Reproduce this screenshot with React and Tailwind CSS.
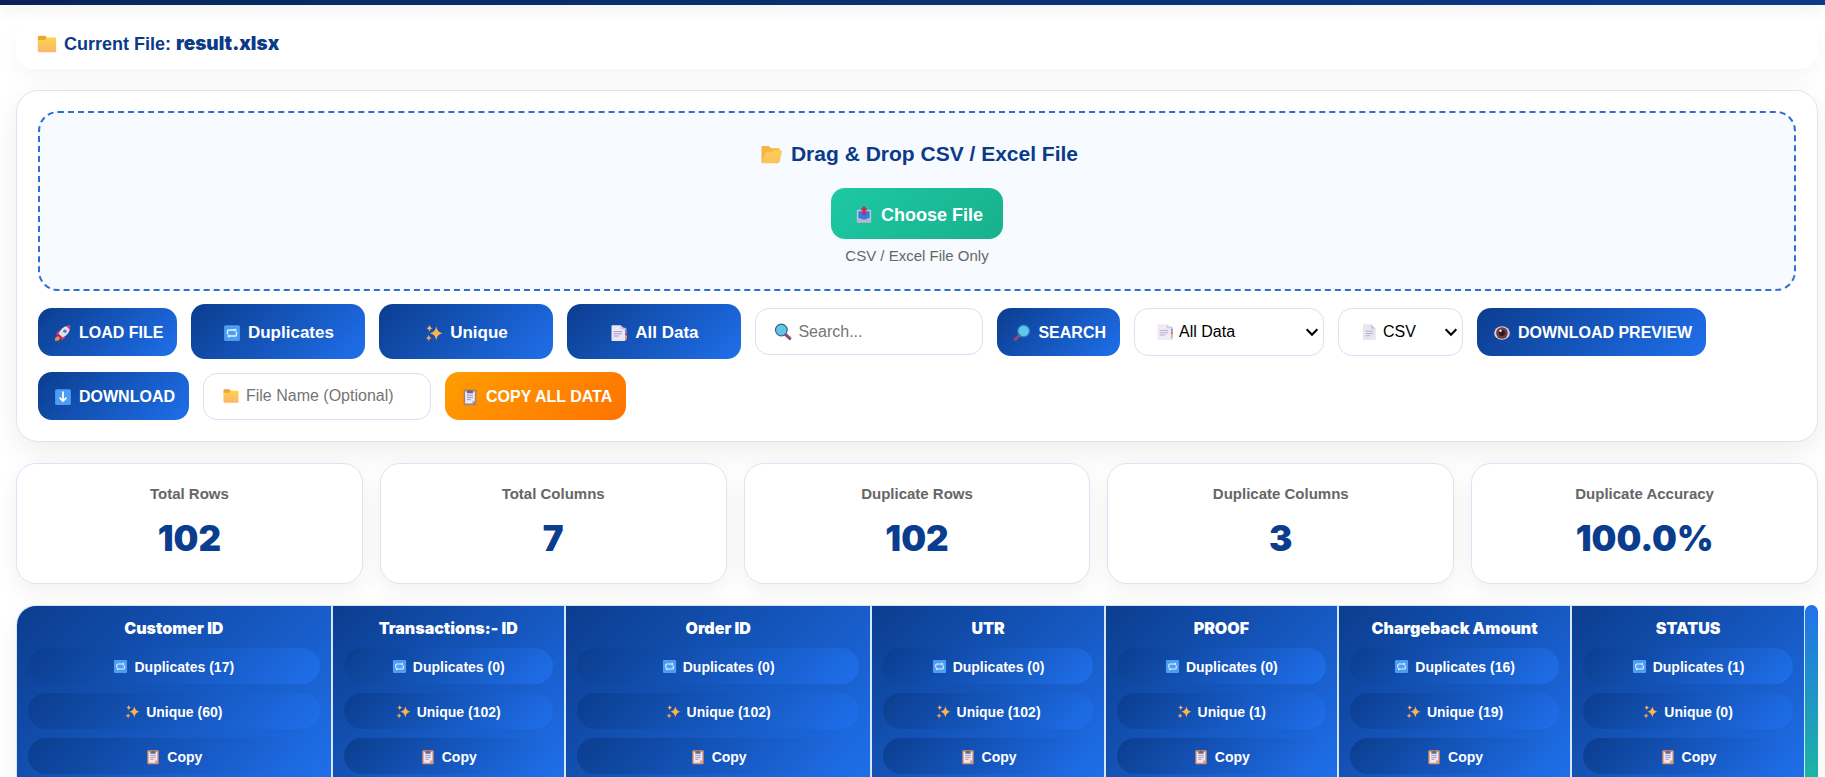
import React, { useRef, useState } from "react";

const BLUE = "bg-[linear-gradient(135deg,#0b3d8e,#1f6feb)]";

const stats = [
  { label: "Total Rows", value: "102" },
  { label: "Total Columns", value: "7" },
  { label: "Duplicate Rows", value: "102" },
  { label: "Duplicate Columns", value: "3" },
  { label: "Duplicate Accuracy", value: "100.0%" },
];

const columns = [
  { name: "Customer ID", duplicates: 17, unique: 60, width: "w-[17.6%]" },
  { name: "Transactions:- ID", duplicates: 0, unique: 102, width: "w-[13.05%]" },
  { name: "Order ID", duplicates: 0, unique: 102, width: "w-[17.15%]" },
  { name: "UTR", duplicates: 0, unique: 102, width: "w-[13.05%]" },
  { name: "PROOF", duplicates: 0, unique: 1, width: "w-[13.05%]" },
  { name: "Chargeback Amount", duplicates: 16, unique: 19, width: "w-[13.05%]" },
  { name: "STATUS", duplicates: 1, unique: 0, width: "w-[13.05%]" },
];

// Icons
function Icon({ className = "size-[18px]", children }) {
  return (
    <svg viewBox="0 0 24 24" className={`shrink-0 ${className}`} fill="none" aria-hidden="true">
      {children}
    </svg>
  );
}

function FolderIcon({ className }) {
  return (
    <Icon className={className}>
      <defs>
        <linearGradient id="folder" x1="0" y1="0" x2="0" y2="1">
          <stop stopColor="#fdd44b" />
          <stop offset="1" stopColor="#fbb56c" />
        </linearGradient>
      </defs>
      <path d="M2 4.500C2 3.700 2.600 3 3.500 3h6c.7 0 1 .3 1.400.8L12 5.500 9 9H2z" fill="#e9a835" />
      <path d="M2 7.500h7.500L12 5h8.700c.8 0 1.300.6 1.300 1.300v13c0 1-.7 1.700-1.600 1.700H3.600C2.700 21 2 20.300 2 19.400z" fill="url(#folder)" />
    </Icon>
  );
}

function OpenFolderIcon({ className }) {
  return (
    <Icon className={className}>
      <defs>
        <linearGradient id="openFolder" x1="0" y1="0" x2="0" y2="1">
          <stop stopColor="#fdcf50" />
          <stop offset="1" stopColor="#fcbf60" />
        </linearGradient>
      </defs>
      <path d="M1.500 4.300C1.500 3.500 2 3 2.800 3h5.700c.6 0 1 .2 1.400.7L11.500 5.500h7.700c.8 0 1.300.6 1.300 1.300V19H3.500L1.500 20z" fill="#f5b548" />
      <path d="M8.500 9h4.500l1.500-1.500h7c1 0 1.500.8 1.300 1.700l-2.300 10.300c-.2.900-1 1.500-2 1.500H3c-1 0-1.500-.5-1.500-1.500L6.300 10.300C6.700 9.400 7.500 9 8.500 9z" fill="url(#openFolder)" />
    </Icon>
  );
}

function OutboxIcon({ className }) {
  return (
    <Icon className={className}>
      <path d="M4 5h16c1 0 1.500.6 1.500 1.500V21c0 .6-.4 1-1 1h-17c-.6 0-1-.4-1-1V6.500C2.500 5.600 3 5 4 5z" fill="#c9c3dc" />
      <path d="M4.500 7h15v9l-3.500 2H8l-3.500-2z" fill="#2f7fe0" />
      <path d="M2.500 16.500H8L9.500 18.500h5l1.500-2h5.500V21c0 .6-.4 1-1 1h-17c-.6 0-1-.4-1-1z" fill="#b9b4d0" />
      <path d="M12 0 17 5.800h-3V12h-4V5.800H7z" fill="#d0214f" />
    </Icon>
  );
}

function RocketIcon({ className }) {
  return (
    <Icon className={className}>
      <path d="M5.500 15.500 1.500 18.500 1.500 22.500l4.500-.5 2.500-3.500z" fill="#f58b3c" />
      <path d="M9.500 8.500 4.500 10 2.500 14.500l5-.5z" fill="#e8305c" />
      <path d="M15.500 14.500 14 19.500 9.500 21.500l.5-5z" fill="#e8305c" />
      <path d="M21.500 2.500c.3 5-1.500 9.500-6 13L11 18l-5-5 2.500-4.500C12 4 16.500 2.200 21.500 2.500z" fill="#e2dfec" />
      <path d="M21.500 2.500c.1 1.800-.1 3.500-.6 5.200L16.300 3.100c1.600-.5 3.400-.7 5.200-.6z" fill="#ef3b62" />
      <circle cx="14.500" cy="9.500" r="2.300" fill="#3a7fd0" />
      <path d="m6 13 5 5-2 1.500L4.500 15z" fill="#c52750" />
    </Icon>
  );
}

function RepeatIcon({ className }) {
  return (
    <Icon className={className}>
      <rect x="1.500" y="1.500" width="21" height="21" rx="2" fill="#4d9df3" />
      <path d="M6 13V9.800C6 8.800 6.800 8 7.800 8H16M18 11v3.200c0 1-.8 1.800-1.800 1.800H8" stroke="#e8f3ff" strokeWidth="1.800" strokeLinecap="round" />
      <path d="M15.500 5.500 18.500 8l-3 2.500zM8.500 13.500l-3 2.500 3 2.500z" fill="#e8f3ff" />
    </Icon>
  );
}

function SparklesIcon({ className }) {
  return (
    <Icon className={className}>
      <path d="M15 3c1 5.200 2.700 7.800 8.500 9.200C17.700 13.600 16 16.300 15 21.500c-1-5.200-2.700-7.900-8.500-9.300C12.300 10.800 14 8.200 15 3z" fill="#fcb34c" />
      <path d="M6 1C6.500 3.800 7.400 5 10 5.700 7.400 6.400 6.500 7.700 6 10.500 5.500 7.700 4.600 6.400 2 5.700 4.600 5 5.500 3.800 6 1z" fill="#fbb46a" />
      <path d="M5 14c.5 2.800 1.400 4 4 4.700C6.400 19.400 5.500 20.700 5 23.500c-.5-2.800-1.400-4.100-4-4.800C3.600 18 4.500 16.800 5 14z" fill="#f79a5b" />
    </Icon>
  );
}

function TabsIcon({ className }) {
  return (
    <Icon className={className}>
      <path d="M6 5h14.500c.8 0 1.500.7 1.500 1.500V21c0 .6-.4 1-1 1H6z" fill="#b7a9c9" />
      <path d="M20 8h2.500v3H20z" fill="#3f8de0" />
      <path d="M20 12h2.500v3H20z" fill="#e23d5f" />
      <path d="M20 16h2.500v3H20z" fill="#f2a544" />
      <path d="M2 2.500C2 2 2.400 1.500 3 1.500h11L20 7v14.500c0 .6-.5 1-1 1H3c-.6 0-1-.4-1-1z" fill="#ece4f7" />
      <path d="M14 1.500 20 7h-5c-.6 0-1-.4-1-1z" fill="#cdbfdd" />
      <path d="M5 10h11M5 13h11M5 16h7" stroke="#a79bbd" strokeWidth="1.300" />
    </Icon>
  );
}

function PageIcon({ className }) {
  return (
    <Icon className={className}>
      <path d="M4 2.500C4 2 4.400 1.500 5 1.500h9.500L21 7.500v14c0 .6-.4 1-1 1H5c-.6 0-1-.4-1-1z" fill="#e4deee" />
      <path d="M14.500 1.500 21 7.500h-5.500c-.6 0-1-.4-1-1z" fill="#c3b6d2" />
      <path d="M7.500 11h10M7.500 14h10M7.500 17h6" stroke="#aaa0bd" strokeWidth="1.300" />
    </Icon>
  );
}

// The lens is at the left; flip puts it at the right
function MagnifierIcon({ className, flip }) {
  return (
    <Icon className={className}>
      <g transform={flip ? "matrix(-1 0 0 1 24 0)" : undefined}>
        <path d="m15.500 15.500 5.500 5" stroke="#8b4a78" strokeWidth="4.200" strokeLinecap="round" />
        <circle cx="9.800" cy="9.300" r="7.800" fill="#5fc6e8" stroke={flip ? "#2f7fc4" : "#3f5f88"} strokeWidth="1.600" />
      </g>
    </Icon>
  );
}

function EyeIcon({ className }) {
  return (
    <Icon className={className}>
      <ellipse cx="12" cy="12" rx="10.500" ry="9" fill="#dccfd8" />
      <circle cx="12" cy="12" r="7.800" fill="#6d3a3f" />
      <circle cx="12" cy="12" r="4" fill="#2b1a22" />
      <circle cx="10" cy="9" r="1.600" fill="#fff" />
    </Icon>
  );
}

function DownIcon({ className }) {
  return (
    <Icon className={className}>
      <rect x="1.500" y="1.500" width="21" height="21" rx="2" fill="#4d9df3" />
      <path d="M12 5.500V17M8 13.500l4 4 4-4" stroke="#fff" strokeWidth="2.400" strokeLinecap="round" strokeLinejoin="round" />
    </Icon>
  );
}

function ClipboardIcon({ className, board = "#dd9270" }) {
  return (
    <Icon className={className}>
      <rect x="3.500" y="2" width="17" height="21" rx="1.500" fill={board} />
      <path d="M5.500 4.500h13v12.500L15 20.500H5.500z" fill="#eee6f5" />
      <path d="M15 20.500V17h3.500z" fill="#c3b4d3" />
      <path d="M8 9.500h8M8 12.500h8M8 15.500h5" stroke="#9c90b5" strokeWidth="1.300" />
      <path d="M8 3.500h2.300a1.800 1.800 0 0 1 3.400 0H16V7H8z" fill="#6f6878" />
    </Icon>
  );
}

function ChevronIcon({ className }) {
  return (
    <Icon className={className}>
      <path d="m4 8 8 8 8-8" stroke="#000" strokeWidth="3.200" />
    </Icon>
  );
}

// Toolbar parts
function ActionButton({ icon, children, className = BLUE }) {
  return (
    <button type="button" className={`flex h-12 items-center gap-[7px] rounded-[14px] pt-0.5 pr-3.5 pl-4 text-base font-bold text-white ${className}`}>
      {icon}
      {children}
    </button>
  );
}

function FilterButton({ icon, children }) {
  return (
    <button type="button" className={`flex h-[55px] w-[174px] items-center justify-center gap-[7px] rounded-[14px] pt-0.5 text-[17px] font-bold text-white ${BLUE}`}>
      {icon}
      {children}
    </button>
  );
}

function TextField({ icon, ...props }) {
  return (
    <label className="relative flex items-center">
      <span className="absolute left-[19px]">{icon}</span>
      <input
        type="text"
        className="h-[47px] w-[228px] rounded-[14px] border border-[#dcdff5] bg-white pr-4 pl-[42px] text-base text-black placeholder:text-[#757575]"
        {...props}
      />
    </label>
  );
}

function SelectField({ icon, label, className, options }) {
  return (
    <label className="relative flex items-center">
      <span className="absolute left-[22px] opacity-80">{icon}</span>
      <select aria-label={label} className={`h-12 appearance-none rounded-[14px] border border-[#dcdff5] bg-white pl-11 text-base text-black ${className}`}>
        {options.map((option) => (
          <option key={option}>{option}</option>
        ))}
      </select>
      <ChevronIcon className="pointer-events-none absolute right-1 size-4" />
    </label>
  );
}

function ColumnButton({ icon, children }) {
  return (
    <button type="button" className={`flex h-9 w-full items-center justify-center gap-1.5 rounded-[18px] pt-px text-sm font-bold text-white ${BLUE}`}>
      {icon}
      {children}
    </button>
  );
}

export default function App() {
  const fileInput = useRef(null);
  const [fileName, setFileName] = useState("result.xlsx");

  // Show the name of the picked file
  const handleFile = (e) => {
    if (e.target.files[0]) setFileName(e.target.files[0].name);
  };

  return (
    <div className="h-screen overflow-hidden bg-white font-['Liberation_Sans',Arial,sans-serif]">
      {/* Header */}
      <header className="relative z-10 h-[5px] bg-[linear-gradient(90deg,#0a1f55,#07295f_8%,#0b3a8a)] shadow-[0_4px_14px_rgba(0,0,0,0.12)]" />

      <main className="flex flex-col pt-3.5 pr-[7px] pl-4">
        {/* Current file */}
        <div className="flex h-[50px] items-center gap-1.5 rounded-[18px] bg-white px-5 text-lg font-bold text-[#0b3a88] shadow-[0_10px_22px_rgba(0,0,0,0.04)]">
          <FolderIcon className="size-[22px]" />
          <p>
            Current File: <span className="font-['Inter'] text-[19px] font-black">{fileName}</span>
          </p>
        </div>

        {/* Upload and actions */}
        <section className="mt-[21px] rounded-[22px] border border-[#dfe2f6] bg-white px-[21px] pt-5 pb-[21px] shadow-[0_10px_30px_rgba(0,0,0,0.07)]">
          <div className="flex h-[180px] flex-col items-center rounded-[20px] border-2 border-dashed border-[#2f6fd0] bg-[#f7fbff] pt-[27px]">
            <h2 className="flex items-center gap-2 pl-1 text-[21px] leading-7 font-bold text-[#0b3a88]">
              <OpenFolderIcon className="size-[23px]" />
              Drag &amp; Drop CSV / Excel File
            </h2>
            <button
              type="button"
              onClick={() => fileInput.current.click()}
              className="mt-5 flex h-[51px] items-center gap-2 rounded-[14px] bg-[linear-gradient(135deg,#1dc9a4,#18b08c)] pt-0.5 pr-5 pl-6 text-lg font-bold text-white"
            >
              <OutboxIcon />
              Choose File
            </button>
            <input ref={fileInput} type="file" accept=".csv,.xlsx,.xls" aria-label="Choose File" onChange={handleFile} className="hidden" />
            <p className="mt-[7px] text-[15px] leading-5 text-[#666]">CSV / Excel File Only</p>
          </div>

          <div className="mt-[13px] flex flex-wrap items-center gap-x-3.5 gap-y-[13px]">
            <ActionButton icon={<RocketIcon />}>LOAD FILE</ActionButton>
            <FilterButton icon={<RepeatIcon />}>Duplicates</FilterButton>
            <FilterButton icon={<SparklesIcon />}>Unique</FilterButton>
            <FilterButton icon={<TabsIcon />}>All Data</FilterButton>
            <TextField icon={<MagnifierIcon />} placeholder="Search..." aria-label="Search" />
            <ActionButton icon={<MagnifierIcon flip />}>SEARCH</ActionButton>
            <SelectField icon={<TabsIcon />} label="Data set" className="w-[190px]" options={["All Data", "Duplicates", "Unique"]} />
            <SelectField icon={<PageIcon />} label="Format" className="w-[125px]" options={["CSV", "Excel"]} />
            <ActionButton icon={<EyeIcon />}>DOWNLOAD PREVIEW</ActionButton>
            <ActionButton icon={<DownIcon />}>DOWNLOAD</ActionButton>
            <TextField icon={<FolderIcon />} placeholder="File Name (Optional)" aria-label="File Name" />
            <ActionButton icon={<ClipboardIcon board="#a08478" />} className="bg-[linear-gradient(135deg,#ff9d00,#ff7300)]">
              COPY ALL DATA
            </ActionButton>
          </div>
        </section>

        {/* Stats */}
        <section className="mt-[21px] grid grid-cols-5 gap-[17px]">
          {stats.map((stat) => (
            <div key={stat.label} className="flex h-[121px] flex-col items-center rounded-[20px] border border-[#dfe2f6] bg-white pt-5 shadow-[0_8px_24px_rgba(0,0,0,0.06)]">
              <p className="text-[15px] leading-5 font-bold text-[#666]">{stat.label}</p>
              <p className="mt-3.5 font-['Inter'] text-[35px] leading-10 font-black text-[#0b3d8e]">{stat.value}</p>
            </div>
          ))}
        </section>

        {/* Column table */}
        <section className="mt-[21px] flex rounded-t-[20px] shadow-[0_8px_24px_rgba(0,0,0,0.06)]">
          <div className="flex-1 overflow-hidden rounded-tl-[20px] border-t border-l border-[#d5e6f8]">
            <table className="w-full table-fixed border-collapse">
              <thead>
                <tr>
                  {columns.map((column) => (
                    <th
                      key={column.name}
                      scope="col"
                      className={`border-r-2 border-[#d5e6f8] px-[11px] pt-3 pb-2.5 last:border-r ${BLUE} ${column.width}`}
                    >
                      <div className="font-['Inter'] text-base leading-5 font-black text-white">{column.name}</div>
                      <div className="mt-2.5 flex flex-col gap-[9px]">
                        <ColumnButton icon={<RepeatIcon className="size-[15px]" />}>Duplicates ({column.duplicates})</ColumnButton>
                        <ColumnButton icon={<SparklesIcon className="size-[15px]" />}>Unique ({column.unique})</ColumnButton>
                        <ColumnButton icon={<ClipboardIcon className="size-4" />}>Copy</ColumnButton>
                      </div>
                    </th>
                  ))}
                </tr>
              </thead>
            </table>
          </div>
          {/* Scroll thumb */}
          <div className="w-[13px] rounded-t-full bg-[linear-gradient(180deg,#2272ea,#1bb8a0)]" />
        </section>
      </main>
    </div>
  );
}
